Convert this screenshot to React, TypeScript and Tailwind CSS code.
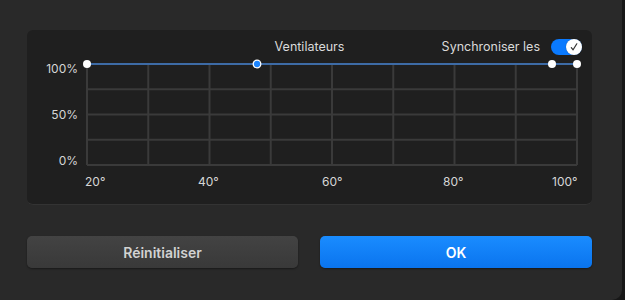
import React from "react";

const cols = Array.from({ length: 9 }, (_, i) => 5 + i * 61.25);
const rows = Array.from({ length: 5 }, (_, j) => 5 + j * 25.25);

const FanChart: React.FC = () => {
  return (
    <svg width="500" height="111" viewBox="0 0 500 111" className="block">
      {rows.map((y) => (
        <line key={"h" + y} x1={5} x2={495} y1={y} y2={y} stroke="#3a3a3a" strokeWidth="2" />
      ))}
      {cols.map((x) => (
        <line key={"v" + x} x1={x} x2={x} y1={5} y2={106} stroke="#3a3a3a" strokeWidth="2" />
      ))}
      <line x1={5} x2={495} y1={5} y2={5} stroke="#3d6ba6" strokeWidth="2" />
      <circle cx={5} cy={5} r={4} fill="#ffffff" />
      <circle cx={175} cy={5} r={3.8} fill="#1a84ff" stroke="#ffffff" strokeWidth="1.3" />
      <circle cx={470} cy={5} r={4} fill="#ffffff" />
      <circle cx={495} cy={5} r={4} fill="#ffffff" />
    </svg>
  );
};

const Toggle: React.FC = () => (
  <div className="flex h-[16px] w-[31px] items-center justify-end rounded-full bg-[#0a7aff]">
    <div className="flex h-[16px] w-[16px] items-center justify-center rounded-full bg-white shadow-[0_0_1px_rgba(0,0,0,0.5)]">
      <svg width="10" height="10" viewBox="0 0 10 10">
        <path d="M2.3 5.6 L4.1 7.8 L7.8 1.8" fill="none" stroke="#333333" strokeWidth="1.2" strokeLinecap="round" strokeLinejoin="round" />
      </svg>
    </div>
  </div>
);

const App: React.FC = () => {
  return (
    <div className="h-[300px] w-[625px] bg-[#171717] font-['Inter','Liberation_Sans',sans-serif]">
      <div className="flex h-[300px] w-[622px] flex-col rounded-br-[10px] bg-[#292929]">
        <div className="ml-[27px] mt-[30px] flex h-[175px] w-[565px] flex-col rounded-[6px] border-b border-[#333333] bg-[#1f1f1f]">
          <div className="mt-[8px] grid h-[16px] grid-cols-[1fr_auto_1fr] items-center text-[12.5px] text-[#dadada]">
            <div />
            <div>Ventilateurs</div>
            <div className="flex items-center justify-end gap-[11px] pr-[10px]">
              <span>Synchroniser les</span>
              <Toggle />
            </div>
          </div>
          <div className="mt-[5px] flex h-[111px]">
            <div className="flex w-[51px] flex-col items-end justify-between pb-[1px] pt-[2px] text-[12px] leading-[16px] text-[#d6d6d6]">
              <span>100%</span>
              <span>50%</span>
              <span>0%</span>
            </div>
            <div className="ml-[4px]">
              <FanChart />
            </div>
          </div>
          <div className="ml-[58px] mt-[4px] flex text-[12px] leading-[16px] text-[#d6d6d6]">
            <span className="w-[113px]">20°</span>
            <span className="w-[124px]">40°</span>
            <span className="w-[121px]">60°</span>
            <span className="w-[109px]">80°</span>
            <span>100°</span>
          </div>
        </div>
        <div className="ml-[27px] mt-[31px] flex w-[565px] gap-[22px]">
          <button className="h-[32px] w-[271px] rounded-[5px] bg-gradient-to-b from-[#434343] to-[#393939] text-[14px] font-semibold text-[#d2d2d2] shadow-[0_1px_2px_rgba(0,0,0,0.4)]">
            Réinitialiser
          </button>
          <button className="h-[32px] w-[272px] rounded-[5px] bg-gradient-to-b from-[#1a8cff] to-[#0a74ee] text-[14px] font-semibold text-white shadow-[0_1px_2px_rgba(0,0,0,0.4)]">
            OK
          </button>
        </div>
      </div>
    </div>
  );
};

export default App;
